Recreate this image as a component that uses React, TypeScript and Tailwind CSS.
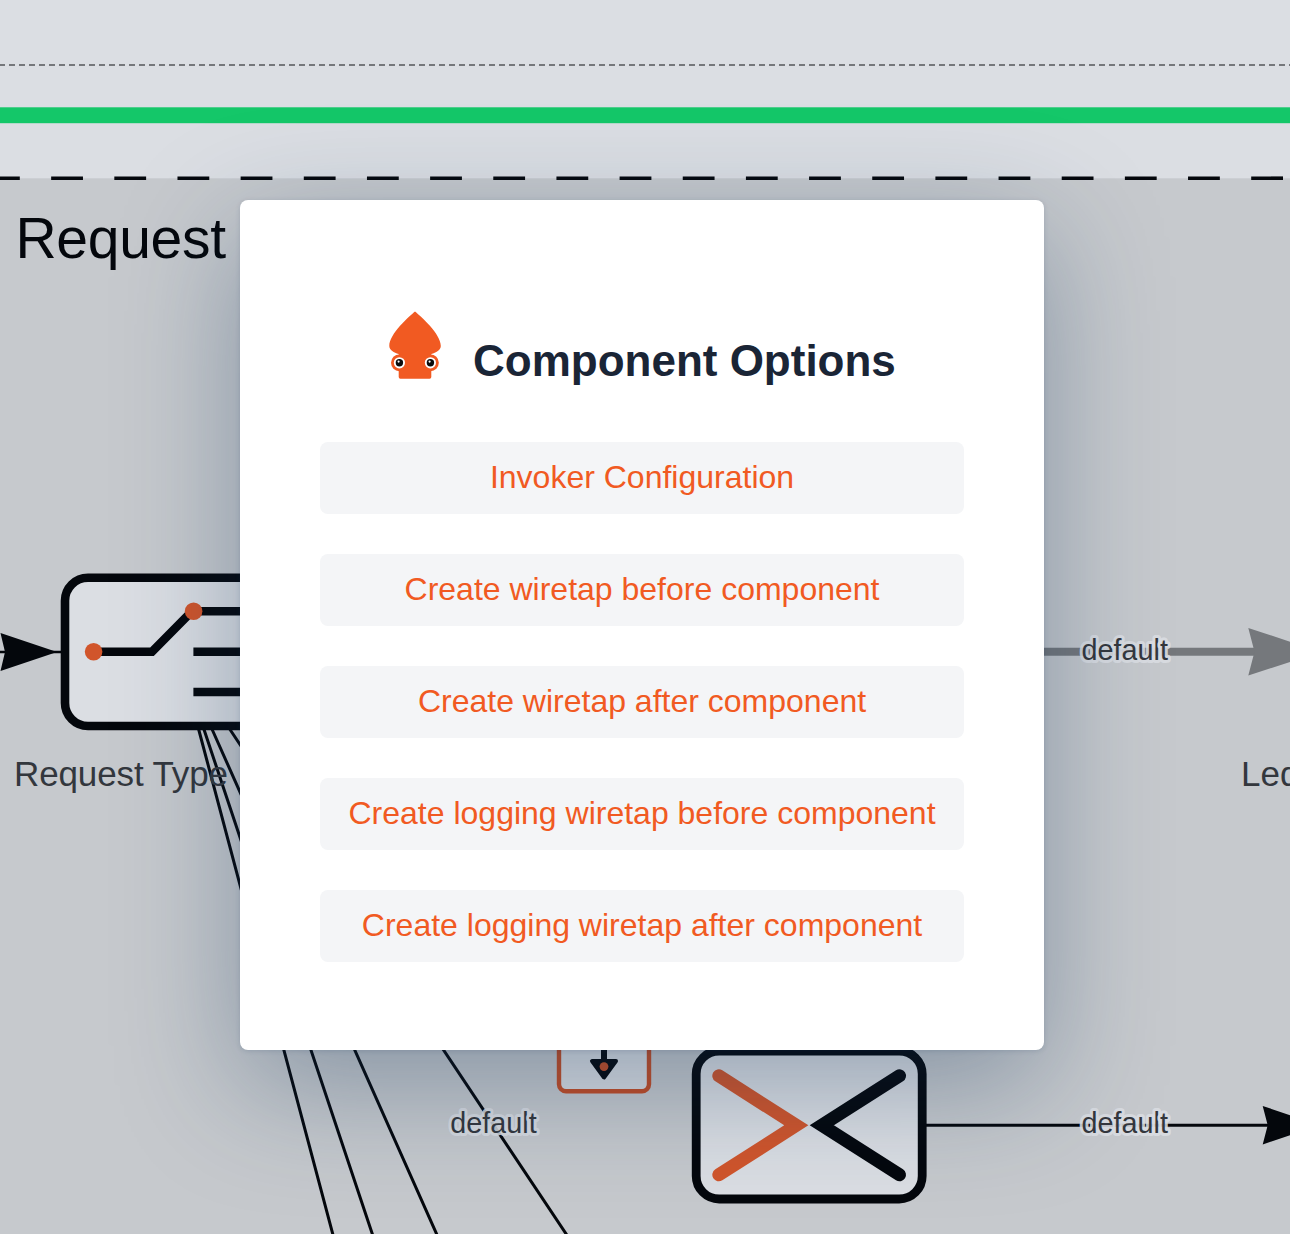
import React from "react";

const options = [
  "Invoker Configuration",
  "Create wiretap before component",
  "Create wiretap after component",
  "Create logging wiretap before component",
  "Create logging wiretap after component",
];

const INK = "#04070c";
const PAPER = "#dbdee3";
const ACCENT = "#d1552b";

function EdgeLabel({ x, y }: { x: number; y: number }) {
  return (
    <text
      x={x}
      y={y}
      fontSize="28.8"
      textLength="86.4"
      fill="#34373d"
      stroke={PAPER}
      strokeOpacity="0.9"
      strokeWidth="6"
      strokeLinejoin="round"
      paintOrder="stroke"
    >
      default
    </text>
  );
}

/** The flow diagram that lies behind the dialog. */
function FlowCanvas() {
  return (
    <svg
      className="absolute inset-0 font-['Liberation_Sans',Arial,sans-serif]"
      width="1290"
      height="1234"
      viewBox="0 0 1290 1234"
    >
      <line x1="-1" y1="65" x2="1290" y2="65" stroke="#75777b" strokeWidth="2" strokeDasharray="6 4" />
      <rect x="0" y="107.3" width="1290" height="15.9" fill="#14c769" />
      <rect x="0" y="178.3" width="1290" height="1056" fill="#c6c9cd" />
      <line x1="-12" y1="178.2" x2="1290" y2="178.2" stroke={INK} strokeWidth="3.6" strokeDasharray="31.8 31.36" />
      <text x="15.5" y="257.5" fontSize="57" textLength="210.5" fill={INK}>
        Request
      </text>

      {/* fan-out connections */}
      <g stroke={INK} strokeWidth="3">
        <path d="M198.3 728L333.3 1236M203.5 728L373 1236M211.5 728L437.5 1236M229 728L567.5 1236" fill="none" />
      </g>

      {/* incoming connection */}
      <path d="M0 652H62" stroke={INK} strokeWidth="2.6" />
      <path d="M0.5 633L57 652L0.5 671L5 652Z" fill={INK} />

      {/* request type router */}
      <rect x="65" y="577.7" width="226" height="148.3" rx="23" fill={PAPER} stroke={INK} strokeWidth="8.6" />
      <path d="M94 651.7H152L192 611.3H260M193.4 651.7H260M193.4 692H260" fill="none" stroke={INK} strokeWidth="8.6" />
      <circle cx="93.6" cy="651.7" r="8.8" fill={ACCENT} />
      <circle cx="193.6" cy="611.3" r="8.8" fill={ACCENT} />
      <text x="14" y="786.3" fontSize="35" textLength="214" fill="#33373d">
        Request Type
      </text>

      {/* default route */}
      <path d="M1040 651.7H1256" stroke="#75787c" strokeWidth="8" />
      <path d="M1248.3 628L1321 651.8L1248.3 675.6L1254.5 651.8Z" fill="#75787c" />
      <EdgeLabel x={1081.5} y={660} />
      <text x="1241" y="786.3" fontSize="35" fill="#33373d">
        Led
      </text>

      {/* wiretap badge */}
      <rect x="559" y="1000" width="90" height="91.3" rx="7" fill={PAPER} stroke="#c54d25" strokeWidth="4.4" />
      <path d="M604 1040V1062" stroke={INK} strokeWidth="6" />
      <path d="M592 1061H616L604 1077.5Z" fill={INK} stroke={INK} strokeWidth="4" strokeLinejoin="round" />
      <circle cx="604" cy="1066.6" r="4.4" fill="#c54d25" />

      {/* translator */}
      <rect x="696.2" y="1051" width="226" height="148" rx="23" fill={PAPER} stroke={INK} strokeWidth="8.8" />
      <path d="M718.8 1075.8L796.3 1125.3L718.8 1174.8" fill="none" stroke={ACCENT} strokeWidth="13" strokeLinecap="round" />
      <path d="M899.5 1075.8L821.8 1125.3L899.5 1174.8" fill="none" stroke={INK} strokeWidth="13" strokeLinecap="round" />
      <path d="M926 1125.2H1270" stroke={INK} strokeWidth="3" />
      <path d="M1262.7 1106L1320 1125.2L1262.7 1144.4L1267.7 1125.2Z" fill={INK} />
      <EdgeLabel x={1081.5} y={1133} />
      <EdgeLabel x={450.3} y={1133} />
    </svg>
  );
}

function SquidLogo() {
  return (
    <svg width="52" height="68" viewBox="389 311 52 68" className="shrink-0">
      <path
        d="M415 311.6C421 316.5 440.8 334 440.8 346C440.8 350 436 352.6 431.3 354V377Q431.3 378.7 429.6 378.7H400.4Q398.7 378.7 398.7 377V354C394 352.6 389.3 350 389.3 346C389.3 334 409 316.5 415 311.6Z"
        fill="#f15a22"
      />
      {[399.4, 430.4].map((cx) => (
        <g key={cx}>
          <circle cx={cx} cy="362.8" r="8.4" fill="#f15a22" />
          <circle cx={cx} cy="362.8" r="5.6" fill="#fff" />
          <circle cx={cx} cy="362.8" r="3.7" fill="#0b0b0b" />
          <circle cx={cx - 0.8} cy="361.6" r="1.1" fill="#fff" />
        </g>
      ))}
    </svg>
  );
}

export default function App() {
  return (
    <div className="relative h-[1234px] w-[1290px] overflow-hidden bg-[#dbdee3] font-['Liberation_Sans',Arial,sans-serif]">
      <FlowCanvas />
      <div className="relative mt-[200px] ml-[240px] h-[850px] w-[804px] rounded-lg bg-white px-20 pt-[111px] shadow-[0_36px_120px_rgba(20,54,88,0.36),0_1px_5px_rgba(20,50,90,0.15)]">
        <div className="flex h-[131px] items-start pl-[69px]">
          <SquidLogo />
          <h1 className="mt-[23px] ml-[32px] text-[44px] leading-[54px] font-bold whitespace-nowrap text-[#1a2536]">
            Component Options
          </h1>
        </div>
        <div className="flex flex-col gap-10">
          {options.map((label) => (
            <button
              key={label}
              className="h-[72px] w-full rounded-lg bg-[#f4f5f7] pb-0.5 text-[32px] leading-none whitespace-nowrap text-[#f15a22]"
            >
              {label}
            </button>
          ))}
        </div>
      </div>
    </div>
  );
}
